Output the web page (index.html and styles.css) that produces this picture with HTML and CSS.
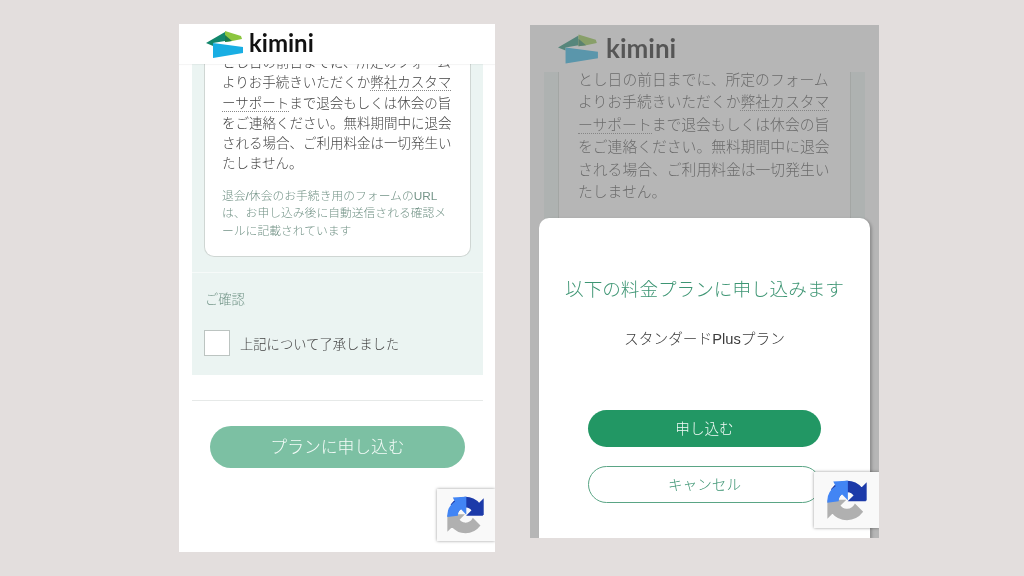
FILE: index.html
```html
<!DOCTYPE html>
<html lang="ja">
<head>
<meta charset="utf-8">
<title>kimini</title>
<link rel="stylesheet" href="styles.css">
</head>
<body>
<svg class="defs" width="0" height="0" aria-hidden="true">
  <symbol id="logo" viewBox="0 0 38 27">
    <polygon points="0,12 19,1 19,10 7,12 7,15" fill="#12876c"/>
    <polygon points="19,0 35,5 36,8 26,10 19,11" fill="#8cc63f"/>
    <polygon points="19,4 26,10 19,11" fill="#1b7a4f"/>
    <polygon points="7,12 37,16 37,22 7,27" fill="#19aee3"/>
  </symbol>
  <symbol id="captcha" viewBox="-2 -2 68 68">
    <path class="cap-gray" d="M.1 32.045l.033 1.37v25.898l7.16-7.16c5.86 7.173 14.774 11.754 24.76 11.754 10.4 0 19.622-4.96 25.458-12.64L45.774 39.41a15.55 15.55 0 0 1-4.754 5.334c-2.05 1.6-4.952 2.906-8.968 2.906-.485 0-.86-.057-1.133-.163-4.976-.393-9.29-3.14-11.83-7.125l8.3-8.307c-10.513.04-22.4.066-27.295-.005"/>
    <path class="cap-navy" d="M64 31.955l-.033-1.37V4.687l-7.16 7.16C50.948 4.674 42.033.093 32.05.093c-10.4 0-19.622 4.96-25.458 12.64l11.736 11.86a15.55 15.55 0 0 1 4.754-5.334c2.05-1.6 4.952-2.906 8.968-2.906.485 0 .86.057 1.133.163 4.976.393 9.29 3.14 11.83 7.125l-8.3 8.307c10.513-.04 22.4-.066 27.295.005"/>
    <path class="cap-blue" d="M32 0L11 1l3.5 7C5.5 13.500 0 22 0 32v2l16.5-2c.4-5 3.5-10.500 7.500-12.300L32 28z"/>
  </symbol>
</svg>

<section class="phone phone-left">
  <header class="top">
    <svg class="logo-mark"><use href="#logo"/></svg>
    <span class="logo-word">kimini</span>
  </header>
  <main class="main">
    <div class="panel">
      <div class="card">
        <p class="body-text">とし日の前日までに、所定のフォーム<br>よりお手続きいただくか<span class="link">弊社カスタマ</span><br><span class="link">ーサポート</span>まで退会もしくは休会の旨<br>をご連絡ください。無料期間中に退会<br>される場合、ご利用料金は一切発生い<br>たしません。</p>
        <p class="note">退会/休会のお手続き用のフォームのURL<br>は、お申し込み後に自動送信される確認メ<br>ールに記載されています</p>
      </div>
    </div>
    <div class="confirm">
      <div class="confirm-title">ご確認</div>
      <label class="check-row"><span class="box"></span><span class="check-label">上記について了承しました</span></label>
    </div>
    <hr class="rule">
    <div class="submit-wrap"><button class="submit" type="button">プランに申し込む</button></div>
  </main>
  <div class="captcha"><svg class="captcha-icon"><use href="#captcha"/></svg></div>
</section>

<section class="phone phone-right">
  <header class="top">
    <svg class="logo-mark"><use href="#logo"/></svg>
    <span class="logo-word">kimini</span>
  </header>
  <main class="main">
    <div class="panel">
      <div class="card">
        <p class="body-text">とし日の前日までに、所定のフォーム<br>よりお手続きいただくか<span class="link">弊社カスタマ</span><br><span class="link">ーサポート</span>まで退会もしくは休会の旨<br>をご連絡ください。無料期間中に退会<br>される場合、ご利用料金は一切発生い<br>たしません。</p>
      </div>
    </div>
  </main>
  <div class="scrim"></div>
  <div class="dialog">
    <h2 class="dialog-title">以下の料金プランに申し込みます</h2>
    <p class="dialog-plan">スタンダードPlusプラン</p>
    <button class="btn btn-primary" type="button">申し込む</button>
    <button class="btn btn-ghost" type="button">キャンセル</button>
  </div>
  <div class="captcha"><svg class="captcha-icon"><use href="#captcha"/></svg></div>
</section>
</body>
</html>
```

FILE: styles.css
```css
* { box-sizing: border-box; }
html, body { margin: 0; height: 576px; overflow: hidden; }
body {
  display: flex;
  align-items: flex-start;
  background: #e3dedd;
  font-family: "Liberation Sans", "Noto Sans CJK JP", sans-serif;
  font-weight: 300;
  color: #444;
}
.defs { position: absolute; }
p, h2 { margin: 0; font-weight: 300; }

.phone {
  position: relative;
  overflow: hidden;
  display: flex;
  flex-direction: column;
  background: #fff;
  filter: blur(0.35px);
}
.phone-left { width: 316px; height: 528px; margin: 24px 0 0 179px; }
.phone-right { width: 349px; height: 513px; margin: 25px 0 0 35px; }

.top { display: flex; align-items: center; flex: none; background: #fff; }
.phone-left .top { height: 40px; padding-left: 27px; gap: 5px; box-shadow: 0 1px 1px rgba(0,0,0,.04); position: relative; z-index: 1; }
.phone-right .top { height: 47px; padding-left: 28px; gap: 7px; }
.logo-mark { display: block; flex: none; }
.phone-left .logo-mark { width: 38px; height: 27px; }
.phone-right .logo-mark { width: 41px; height: 30px; }
.logo-word { font-family: "Lato", sans-serif; font-weight: 700; color: #111; line-height: 1; padding-bottom: 2px; }
.phone-left .logo-word { font-size: 24px; }
.phone-right .logo-word { font-size: 26px; }

.main { flex: 1; overflow: hidden; }
.panel { background: #ebf4f2; }
.phone-left .panel { margin: 0 12px 0 13px; padding: 0 12px 15px; }
.phone-right .panel { margin: 0 14px; padding: 0 14px 30px; }
.card { background: #fff; border: 1px solid #cfd6d3; border-top: 0; border-radius: 0 0 10px 10px; white-space: nowrap; }
.phone-left .card { margin-top: -11px; padding: 0 17px 16px; }
.phone-right .card { margin-top: -3px; padding: 0 19px 40px; }
.phone-left .body-text { font-size: 13.5px; line-height: 20.3px; }
.phone-right .body-text { font-size: 14.8px; line-height: 22.4px; }
.link { border-bottom: 1px dotted #888; }
.note { margin-top: 13px; font-size: 11.8px; line-height: 17.5px; color: #749488; }

.confirm { margin: 0 12px 0 13px; height: 103px; padding: 18px 13px 0 12px; background: #ebf4f2; border-top: 1px solid #f6faf9; }
.confirm-title { font-size: 13.3px; line-height: 18px; color: #74968a; padding-left: 1px; }
.check-row { display: flex; align-items: center; gap: 10px; margin-top: 21px; }
.box { width: 26px; height: 26px; flex: none; background: #fff; border: 1px solid #bcc4c1; }
.check-label { font-size: 13.3px; color: #444; }

.rule { margin: 25px 12px 0 13px; border: 0; border-top: 1px solid #e6e9e8; }
.submit-wrap { display: flex; padding: 25px 30px 0 31px; }
.submit {
  width: 100%;
  height: 42px;
  padding: 0 0 2px;
  border: 0;
  border-radius: 21px;
  background: #7cc0a3;
  color: #f4fbf8;
  font: inherit;
  font-size: 16.8px;
}

.scrim { position: absolute; inset: 0; background: rgba(133,133,133,.6); }

.dialog {
  position: absolute;
  left: 9px;
  right: 9px;
  top: 193px;
  bottom: 0;
  display: flex;
  flex-direction: column;
  align-items: center;
  background: #fff;
  border-radius: 10px 10px 0 0;
  box-shadow: 2px 1px 3px rgba(0,0,0,.22);
}
.dialog-title { margin-top: 60px; font-size: 18.6px; line-height: 24px; color: #3d9573; white-space: nowrap; }
.dialog-plan { margin-top: 26px; font-size: 14.7px; line-height: 22px; color: #3c3c3c; white-space: nowrap; }
.btn { width: 233px; height: 37px; padding: 0 0 3px; border-radius: 19px; font: inherit; font-size: 14.6px; }
.btn-primary { margin-top: 60px; border: 0; background: #229764; color: #f2faf6; }
.btn-ghost { margin-top: 19px; border: 1px solid #5aa585; background: #fff; color: #3d9573; }

.captcha {
  position: absolute;
  right: 0;
  display: flex;
  align-items: center;
  justify-content: center;
  background: #f9f9f9;
  box-shadow: 0 0 3px rgba(0,0,0,.4);
}
.phone-left .captcha { top: 465px; width: 58px; height: 52px; }
.phone-right .captcha { top: 447px; width: 65px; height: 56px; }
.phone-left .captcha-icon { width: 37px; height: 38px; margin-left: -2px; }
.phone-right .captcha-icon { width: 40px; height: 41px; }
.cap-gray { fill: #b0b0b0; stroke: #b0b0b0; stroke-width: 3; }
.cap-navy { fill: #1c3aa9; stroke: #1c3aa9; stroke-width: 3; }
.cap-blue { fill: #4285f4; stroke: #4285f4; stroke-width: 3; }
```
